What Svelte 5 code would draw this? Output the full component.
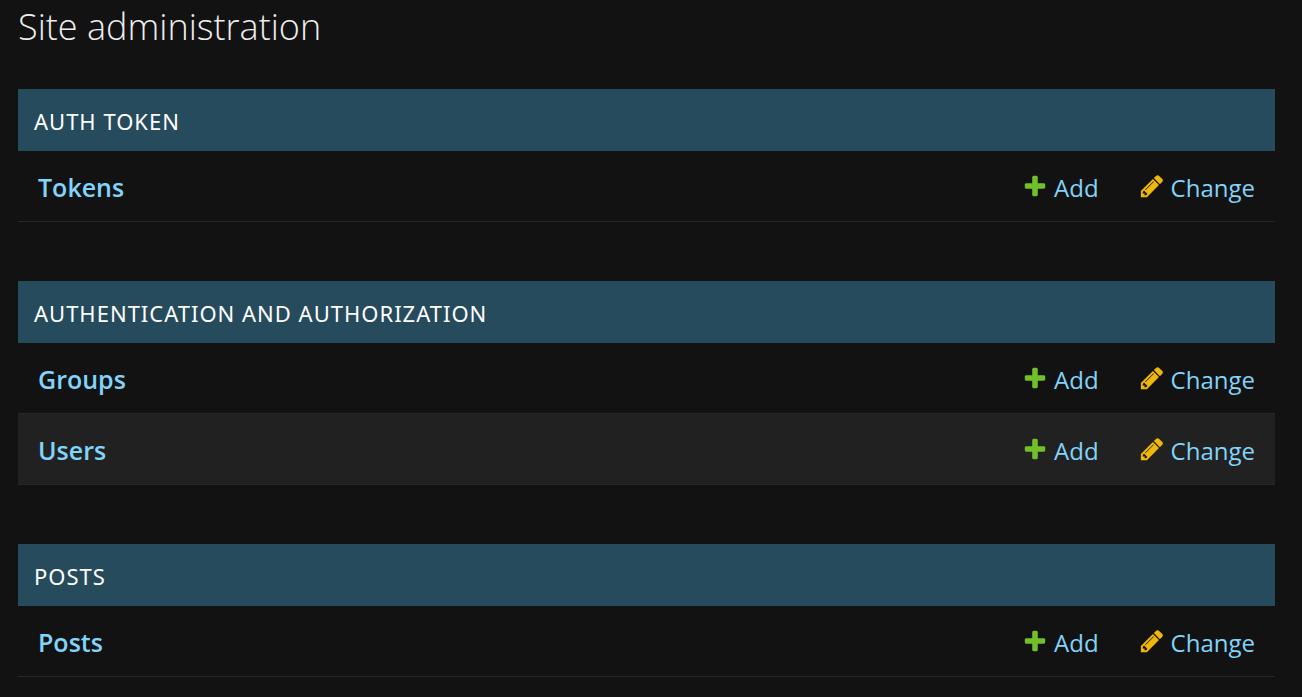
<script>
  const apps = [
    { name: 'Auth Token', slug: 'authtoken', models: ['Tokens'] },
    { name: 'Authentication and Authorization', slug: 'auth', models: ['Groups', 'Users'] },
    { name: 'Posts', slug: 'posts', models: ['Posts'] }
  ];
</script>

<main>
  <h1>Site administration</h1>

  {#each apps as app}
    <table>
      <caption><a href="#{app.slug}">{app.name}</a></caption>
      <tbody>
        {#each app.models as model}
          <tr>
            <th scope="row"><a href="#{model}">{model}</a></th>
            <td>
              <a class="action" href="#{model}-add">
                <svg viewBox="0 0 1792 1792" fill="#70bf2b" aria-hidden="true">
                  <path d="M1600 796v192q0 40-28 68t-68 28h-416v416q0 40-28 68t-68 28h-192q-40 0-68-28t-28-68v-416h-416q-40 0-68-28t-28-68v-192q0-40 28-68t68-28h416v-416q0-40 28-68t68-28h192q40 0 68 28t28 68v416h416q40 0 68 28t28 68z" />
                </svg>
                <span>Add</span>
              </a>
            </td>
            <td>
              <a class="action" href="#{model}-change">
                <svg viewBox="0 0 1792 1792" fill="#efb80b" aria-hidden="true">
                  <path d="M491 1536l91-91-235-235-91 91v107h128v128h107zm523-928q0-22-22-22-10 0-17 7l-542 542q-7 7-7 17 0 22 22 22 10 0 17-7l542-542q7-7 7-17zm-54-192l416 416-832 832h-416v-416zm683 96q0 53-37 90l-166 166-416-416 166-165q36-38 90-38 53 0 91 38l235 234q37 39 37 91z" />
                </svg>
                <span>Change</span>
              </a>
            </td>
          </tr>
        {/each}
      </tbody>
    </table>
  {/each}
</main>

<style>
  :global(body) {
    margin: 0;
    background: #121212;
    color: #eee;
    font-family: 'Segoe UI', 'Open Sans', 'Noto Sans', sans-serif;
    font-size: 24px;
  }

  main {
    padding: 3px 27px 0 18px;
  }

  h1 {
    margin: 0 0 38px;
    font-size: 36px;
    font-weight: 300;
    line-height: 48px;
  }

  table {
    width: 100%;
    margin-bottom: 59px;
    border-spacing: 0;
  }

  table:last-child {
    margin-bottom: 20px;
  }

  caption {
    padding: 17px 16px 15px;
    background: #264b5d;
    font-family: 'Segoe UI', 'Noto Sans', 'Open Sans', sans-serif;
    font-size: 22px;
    line-height: 30px;
    letter-spacing: 1px;
    text-align: left;
    text-transform: uppercase;
  }

  a {
    color: #81d4fa;
    text-decoration: none;
  }

  caption a {
    color: #fff;
  }

  tr:nth-child(even) {
    background: #212121;
  }

  th,
  td {
    padding: 22px 20px 18px;
    border-bottom: 1px solid #272727;
    line-height: 30px;
    white-space: nowrap;
  }

  th {
    width: 100%;
    padding: 21px 20px 19px;
    font-size: 25px;
    font-weight: 600;
    text-align: left;
  }

  .action {
    display: flex;
    align-items: flex-start;
    gap: 6px;
  }

  svg {
    width: 26px;
    height: 26px;
    flex: none;
  }
</style>
